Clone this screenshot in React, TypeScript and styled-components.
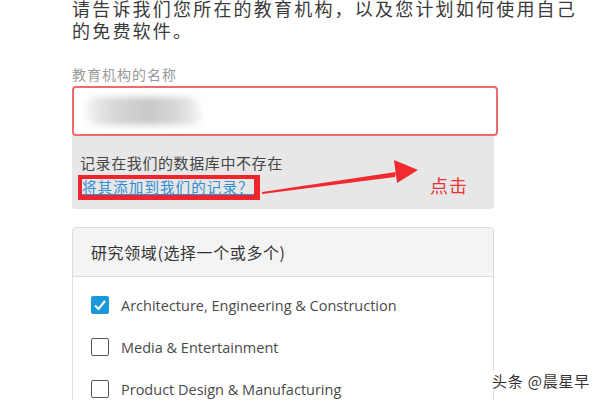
import styled, { createGlobalStyle } from "styled-components";

const GlobalStyle = createGlobalStyle`
    html, body {
        margin: 0;
        padding: 0;
        background: #ffffff;
        overflow: hidden;
    }
    body {
        font-family: "Noto Sans CJK SC", "Noto Sans", sans-serif;
        color: #333;
    }
`;

const Page = styled.div`
    position: relative;
    width: 600px;
    height: 400px;
    overflow: hidden;
    padding-left: 72px;
    box-sizing: border-box;
`;

const Intro = styled.p`
    margin: -3px 0 0 0;
    width: 520px;
    font-size: 18px;
    line-height: 22px;
    letter-spacing: 2.2px;
    color: #3a3a3a;
`;

const FieldLabel = styled.div`
    margin-top: 24px;
    font-size: 14px;
    line-height: 18px;
    letter-spacing: 1px;
    color: #9a9a9a;
`;

const InputBox = styled.div`
    margin-top: 3px;
    width: 426px;
    height: 50px;
    box-sizing: border-box;
    border: 2px solid #ee6a6d;
    border-radius: 4px;
    background: #fff;
    display: flex;
    align-items: center;
    padding-left: 12px;
`;

const BlurredValue = styled.div`
    width: 115px;
    height: 28px;
    border-radius: 10px 14px 6px 12px;
    background: linear-gradient(90deg, #f2f2f2 0%, #d6d6d6 25%, #c8c8c8 55%, #d8d8d8 80%, #f4f4f4 100%);
    filter: blur(3px);
`;

const Notice = styled.div`
    position: relative;
    width: 422px;
    height: 73px;
    box-sizing: border-box;
    background: #e7e7e7;
    border-radius: 0 0 3px 3px;
    padding: 17px 0 0 8px;
`;

const NoticeText = styled.div`
    font-size: 15px;
    line-height: 20px;
    letter-spacing: 0.6px;
    color: #444;
`;

const Highlight = styled.div`
    display: inline-block;
    margin-top: 2px;
    margin-left: -2px;
    border-style: solid;
    border-color: #f2242b;
    border-width: 4px 6px 6px 4px;
    line-height: 14px;
`;

const AddLink = styled.a`
    font-size: 14.5px;
    letter-spacing: 1.1px;
    color: #2f8ed6;
    text-decoration: underline;
`;

const ArrowLayer = styled.svg`
    position: absolute;
    left: 0;
    top: 0;
    pointer-events: none;
`;

const ClickNote = styled.span`
    position: absolute;
    left: 358px;
    top: 36px;
    font-size: 18px;
    letter-spacing: 1px;
    color: #e8353a;
`;

const Card = styled.div`
    margin-top: 18px;
    width: 422px;
    box-sizing: border-box;
    border: 1px solid #dcdcdc;
    border-radius: 4px;
`;

const CardHeader = styled.div`
    height: 48px;
    display: flex;
    align-items: center;
    padding-left: 18px;
    background: #f4f4f4;
    border-bottom: 1px solid #dcdcdc;
    border-radius: 4px 4px 0 0;
    font-size: 16px;
    letter-spacing: 0.6px;
    color: #333;
`;

const CardBody = styled.div`
    padding: 7px 0 0 18px;
`;

const Row = styled.label`
    height: 42px;
    display: flex;
    align-items: center;
    gap: 12px;
    font-family: "Open Sans", "Noto Sans", sans-serif;
    font-size: 14.5px;
    color: #4a4a4a;
`;

const Box = styled.span<{ checked: boolean }>`
    width: 18px;
    height: 18px;
    box-sizing: border-box;
    border-radius: 2px;
    border: ${p => (p.checked ? "none" : "1.5px solid #555")};
    background: ${p => (p.checked ? "#1a98da" : "#fff")};
    display: flex;
    align-items: center;
    justify-content: center;
`;

const Watermark = styled.div`
    position: absolute;
    left: 492px;
    top: 371px;
    font-size: 15px;
    line-height: 20px;
    letter-spacing: 0.8px;
    color: #333;
    background: rgba(255, 255, 255, 0.85);
`;

const fields = [
    { name: "Architecture, Engineering & Construction", checked: true },
    { name: "Media & Entertainment", checked: false },
    { name: "Product Design & Manufacturing", checked: false },
];

export default function App() {
    return <Page>
        <GlobalStyle />
        <Intro>请告诉我们您所在的教育机构，以及您计划如何使用自己的免费软件。</Intro>
        <FieldLabel>教育机构的名称</FieldLabel>
        <InputBox>
            <BlurredValue />
        </InputBox>
        <Notice>
            <NoticeText>记录在我们的数据库中不存在</NoticeText>
            <Highlight>
                <AddLink>将其添加到我们的记录？</AddLink>
            </Highlight>
            <ArrowLayer width="422" height="73" viewBox="0 0 422 73">
                <polygon points="190,56 324,36 323,41 190,58" fill="#f22a30" />
                <polygon points="322,24 346,34 325,47" fill="#f22a30" />
            </ArrowLayer>
            <ClickNote>点击</ClickNote>
        </Notice>
        <Card>
            <CardHeader>研究领域(选择一个或多个)</CardHeader>
            <CardBody>
                {fields.map(f => (
                    <Row key={f.name}>
                        <Box checked={f.checked}>
                            {f.checked && (
                                <svg width="14" height="14" viewBox="0 0 14 14">
                                    <path d="M2 7.5 L5.5 11 L12 3" stroke="#fff" strokeWidth="2" fill="none" />
                                </svg>
                            )}
                        </Box>
                        {f.name}
                    </Row>
                ))}
            </CardBody>
        </Card>
        <Watermark>头条 @晨星早</Watermark>
    </Page>;
}
